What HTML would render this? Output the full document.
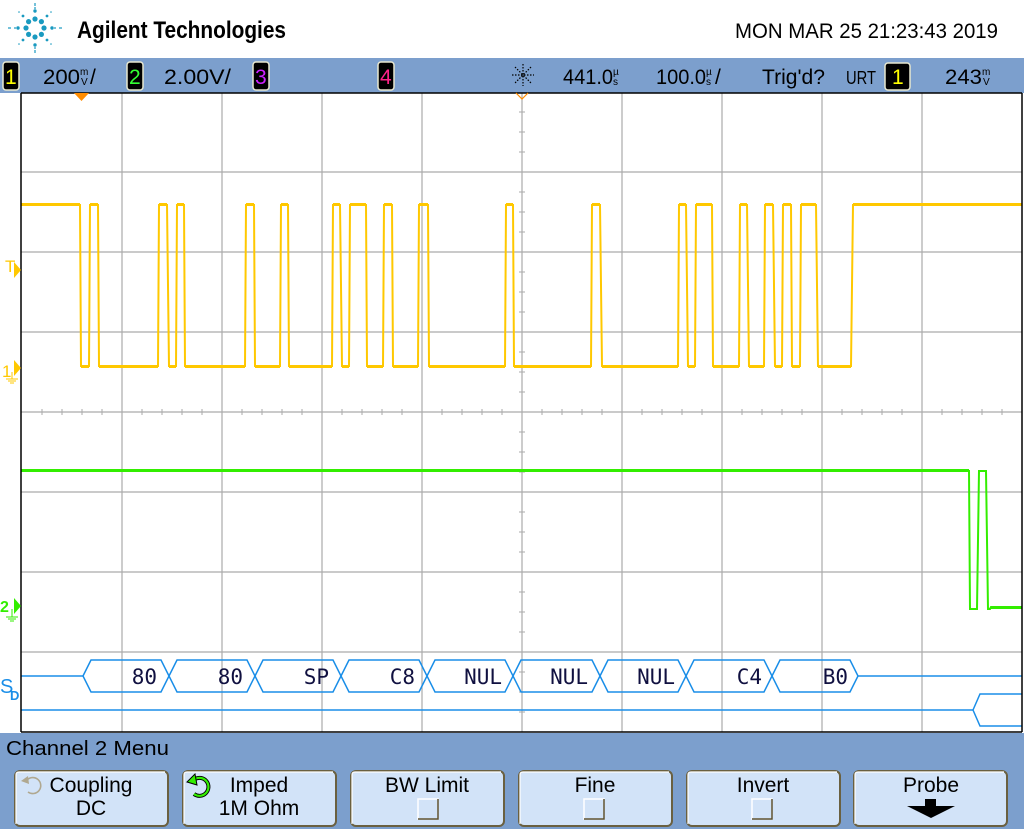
<!DOCTYPE html>
<html><head><meta charset="utf-8"><style>
html,body{margin:0;padding:0;background:#fff;}
svg{display:block;font-family:"Liberation Sans",sans-serif;}
</style></head><body>
<svg width="1024" height="829" viewBox="0 0 1024 829" xmlns="http://www.w3.org/2000/svg">
<!-- header -->
<rect x="0" y="0" width="1024" height="58" fill="#fff"/>
<g fill="#1a9ac0" transform="translate(35,28)">
  <circle cx="0" cy="-9" r="2.6"/><circle cx="0" cy="9" r="2.6"/><circle cx="-9" cy="0" r="2.6"/><circle cx="9" cy="0" r="2.6"/>
  <circle cx="-6.4" cy="-6.4" r="2.6"/><circle cx="6.4" cy="-6.4" r="2.6"/><circle cx="-6.4" cy="6.4" r="2.6"/><circle cx="6.4" cy="6.4" r="2.6"/>
  <circle cx="0" cy="-17" r="1.7"/><circle cx="0" cy="17" r="1.7"/><circle cx="-17" cy="0" r="1.7"/><circle cx="17" cy="0" r="1.7"/>
  <circle cx="-12" cy="-12" r="1.4"/><circle cx="12" cy="-12" r="1.4"/><circle cx="-12" cy="12" r="1.4"/><circle cx="12" cy="12" r="1.4"/>
  <circle cx="-16" cy="-16" r="0.8"/><circle cx="16" cy="-16" r="0.8"/><circle cx="-16" cy="16" r="0.8"/><circle cx="16" cy="16" r="0.8"/>
  <rect x="-0.6" y="-25" width="1.2" height="3"/><rect x="-0.6" y="22" width="1.2" height="3"/><rect x="-27" y="-0.6" width="3" height="1.2"/><rect x="24" y="-0.6" width="3" height="1.2"/>
  <rect x="-21" y="-0.6" width="2" height="1.2"/><rect x="19" y="-0.6" width="2" height="1.2"/><rect x="-0.6" y="-21" width="1.2" height="2"/><rect x="-0.6" y="19" width="1.2" height="2"/>
</g>
<text x="77" y="38" font-size="24" font-weight="bold" fill="#000" textLength="209" lengthAdjust="spacingAndGlyphs">Agilent Technologies</text>
<text x="735" y="38" font-size="21" fill="#000" textLength="263" lengthAdjust="spacingAndGlyphs">MON MAR 25 21:23:43 2019</text>

<!-- status bar -->
<rect x="0" y="58" width="1024" height="35" fill="#7c9fcd"/>
<g font-size="21">
<rect x="3" y="62" width="16" height="28" rx="3" fill="#000" stroke="#e8e8d0" stroke-width="1.5"/>
<text x="5" y="84" fill="#ffff00">1</text>
<text x="43" y="84" fill="#000" textLength="37" lengthAdjust="spacingAndGlyphs">200</text>
<text x="80" y="75" font-size="10" fill="#000">m</text><text x="81" y="85" font-size="10" fill="#000">V</text>
<text x="90" y="84" fill="#000">/</text>
<rect x="127" y="62" width="16" height="28" rx="3" fill="#000" stroke="#e8e8d0" stroke-width="1.5"/>
<text x="129" y="84" fill="#33ff33">2</text>
<text x="164" y="84" fill="#000" textLength="67" lengthAdjust="spacingAndGlyphs">2.00V/</text>
<rect x="253" y="62" width="16" height="28" rx="3" fill="#000" stroke="#e8e8d0" stroke-width="1.5"/>
<text x="255" y="84" fill="#cc22ff">3</text>
<rect x="378" y="62" width="16" height="28" rx="3" fill="#000" stroke="#e8e8d0" stroke-width="1.5"/>
<text x="380" y="84" fill="#ff2288">4</text>
<g stroke="#000" stroke-width="1.2" stroke-dasharray="1.5 1.5"><line x1="512" y1="75" x2="534" y2="75"/><line x1="523" y1="64" x2="523" y2="86"/><line x1="515" y1="67" x2="531" y2="83"/><line x1="531" y1="67" x2="515" y2="83"/></g>
<text x="563" y="84" fill="#000" textLength="50" lengthAdjust="spacingAndGlyphs">441.0</text>
<text x="613" y="75" font-size="10" fill="#000">µ</text><text x="613" y="85" font-size="10" fill="#000">s</text>
<text x="656" y="84" fill="#000" textLength="50" lengthAdjust="spacingAndGlyphs">100.0</text>
<text x="706" y="75" font-size="10" fill="#000">µ</text><text x="706" y="85" font-size="10" fill="#000">s</text>
<text x="715" y="84" fill="#000">/</text>
<text x="762" y="84" fill="#000" textLength="63" lengthAdjust="spacingAndGlyphs">Trig'd?</text>
<text x="846" y="84" fill="#000" font-size="18" textLength="30" lengthAdjust="spacingAndGlyphs">URT</text>
<rect x="885" y="63" width="25" height="27" rx="3" fill="#000" stroke="#e8e8d0" stroke-width="1.5"/>
<text x="892" y="84" fill="#ffff00">1</text>
<text x="945" y="84" fill="#000" textLength="37" lengthAdjust="spacingAndGlyphs">243</text>
<text x="982" y="75" font-size="10" fill="#000">m</text><text x="983" y="85" font-size="10" fill="#000">V</text>
</g>

<!-- screen -->
<rect x="21" y="93" width="1001" height="639" fill="#fff"/>
<g stroke="#aaa" stroke-width="1.2">
  <line x1="122" y1="93" x2="122" y2="732"/><line x1="222" y1="93" x2="222" y2="732"/><line x1="322" y1="93" x2="322" y2="732"/><line x1="422" y1="93" x2="422" y2="732"/>
  <line x1="522" y1="93" x2="522" y2="732"/><line x1="622" y1="93" x2="622" y2="732"/><line x1="722" y1="93" x2="722" y2="732"/><line x1="822" y1="93" x2="822" y2="732"/><line x1="922" y1="93" x2="922" y2="732"/>
  <line x1="21" y1="172" x2="1022" y2="172"/><line x1="21" y1="252" x2="1022" y2="252"/><line x1="21" y1="332" x2="1022" y2="332"/><line x1="21" y1="412" x2="1022" y2="412"/>
  <line x1="21" y1="492" x2="1022" y2="492"/><line x1="21" y1="572" x2="1022" y2="572"/><line x1="21" y1="652" x2="1022" y2="652"/>
</g>
<g stroke="#aaa" stroke-width="1">
  <path d="M42 409v6M62 409v6M82 409v6M102 409v6M142 409v6M162 409v6M182 409v6M202 409v6M242 409v6M262 409v6M282 409v6M302 409v6M342 409v6M362 409v6M382 409v6M402 409v6M442 409v6M462 409v6M482 409v6M502 409v6M542 409v6M562 409v6M582 409v6M602 409v6M642 409v6M662 409v6M682 409v6M702 409v6M742 409v6M762 409v6M782 409v6M802 409v6M842 409v6M862 409v6M882 409v6M902 409v6M942 409v6M962 409v6M982 409v6M1002 409v6"/>
  <path d="M519 112h6M519 132h6M519 152h6M519 192h6M519 212h6M519 232h6M519 272h6M519 292h6M519 312h6M519 352h6M519 372h6M519 392h6M519 432h6M519 452h6M519 472h6M519 512h6M519 532h6M519 552h6M519 592h6M519 612h6M519 632h6M519 672h6M519 692h6M519 712h6"/>
</g>
<!-- yellow -->
<polyline fill="none" stroke="#ffc800" stroke-width="2" points="21,205 80,205 81,366 89,366 90,205 98,205 99,366 158,366 159,205 167,205 169,366 176,366 177,205 184,205 185,366 245,366 246,205 254,205 255,366 280,366 281,205 288,205 289,366 332,366 333,205 340,205 342,366 349,366 350,205 366,205 367,366 383,366 384,205 392,205 393,366 418,366 419,205 428,205 429,366 505,366 506,205 513,205 514,366 591,366 592,205 600,205 602,366 678,366 679,205 686,205 688,366 695,366 696,205 712,205 713,366 739,366 740,205 747,205 749,366 764,366 765,205 773,205 775,366 782,366 783,205 791,205 792,366 800,366 801,205 816,205 818,366 851,366 853,205 1022,205"/>
<path d="M21 204h59M90 204h8M159 204h8M177 204h7M246 204h8M281 204h7M333 204h7M350 204h16M384 204h8M419 204h9M506 204h7M592 204h8M679 204h7M696 204h16M740 204h7M765 204h8M783 204h8M801 204h15M853 204h169" stroke="#ffc800" stroke-width="2"/>
<path d="M81 367h8M99 367h59M169 367h7M185 367h60M255 367h25M289 367h43M342 367h7M367 367h16M393 367h25M429 367h76M514 367h77M602 367h76M688 367h7M713 367h26M749 367h15M775 367h7M792 367h8M818 367h33" stroke="#ffc800" stroke-width="2"/>
<!-- green -->
<polyline fill="none" stroke="#33ee00" stroke-width="2" points="21,471 969,471 970,609 977,609 979,471 986,471 988,609 990,609 991,607 1022,607"/>
<line x1="21" y1="470" x2="969" y2="470" stroke="#33ee00" stroke-width="2"/>
<line x1="991" y1="608" x2="1022" y2="608" stroke="#33ee00" stroke-width="2"/>
<!-- serial decode -->
<g fill="none" stroke="#1a8ee8" stroke-width="1.5">
  <line x1="21" y1="676" x2="83" y2="676"/>
  <line x1="858" y1="676" x2="1022" y2="676"/>
  <line x1="21" y1="710" x2="973" y2="710"/>
  <path d="M973 710 L980 694 L1022 694 M973 710 L980 726 L1022 726"/>
  <path d="M83 676 L91 660 L161 660 L169 676 L161 692 L91 692 Z"/>
  <path d="M169 676 L177 660 L247 660 L255 676 L247 692 L177 692 Z"/>
  <path d="M255 676 L263 660 L333 660 L341 676 L333 692 L263 692 Z"/>
  <path d="M341 676 L349 660 L419 660 L427 676 L419 692 L349 692 Z"/>
  <path d="M427 676 L435 660 L505 660 L513 676 L505 692 L435 692 Z"/>
  <path d="M513 676 L521 660 L592 660 L600 676 L592 692 L521 692 Z"/>
  <path d="M600 676 L608 660 L678 660 L686 676 L678 692 L608 692 Z"/>
  <path d="M686 676 L694 660 L764 660 L772 676 L764 692 L694 692 Z"/>
  <path d="M772 676 L780 660 L850 660 L858 676 L850 692 L780 692 Z"/>
</g>
<g font-family="'DejaVu Sans Mono','Liberation Mono',monospace" font-size="21" fill="#101040" text-anchor="end">
  <text x="157" y="684" font-family="'DejaVu Sans Mono','Liberation Mono',monospace">80</text>
  <text x="243" y="684" font-family="'DejaVu Sans Mono','Liberation Mono',monospace">80</text>
  <text x="329" y="684" font-family="'DejaVu Sans Mono','Liberation Mono',monospace">SP</text>
  <text x="415" y="684" font-family="'DejaVu Sans Mono','Liberation Mono',monospace">C8</text>
  <text x="502" y="684" font-family="'DejaVu Sans Mono','Liberation Mono',monospace">NUL</text>
  <text x="588" y="684" font-family="'DejaVu Sans Mono','Liberation Mono',monospace">NUL</text>
  <text x="675" y="684" font-family="'DejaVu Sans Mono','Liberation Mono',monospace">NUL</text>
  <text x="762" y="684" font-family="'DejaVu Sans Mono','Liberation Mono',monospace">C4</text>
  <text x="848" y="684" font-family="'DejaVu Sans Mono','Liberation Mono',monospace">B0</text>
</g>
<!-- border -->
<line x1="21" y1="93" x2="1022" y2="93" stroke="#000" stroke-width="1.5"/>
<line x1="21" y1="93" x2="21" y2="732" stroke="#000" stroke-width="1.5"/>
<line x1="1022" y1="93" x2="1022" y2="732" stroke="#000" stroke-width="1.5"/>
<line x1="21" y1="732" x2="1022" y2="732" stroke="#000" stroke-width="1.5"/>
<!-- left markers -->
<path d="M74 93 L89 93 L81.5 101 Z" fill="#ff8c00"/>
<path d="M516 93 L522 99 L528 93" fill="none" stroke="#ff8c00" stroke-width="1.2"/>
<text x="5" y="272" font-size="17" fill="#ffc800">T</text>
<path d="M14 262 L21 270 L14 278 Z" fill="#ffc800"/>
<text x="2" y="377" font-size="17" fill="#ffc800">1</text>
<path d="M14 360 L21 368 L14 376 Z" fill="#ffc800"/>
<path d="M12 372v7M6 379h12M8 381h8M10 383h4" stroke="#ffc800" fill="none"/>
<text x="0" y="612" font-size="16" font-weight="bold" fill="#33ee00">2</text>
<path d="M14 598 L21 606 L14 614 Z" fill="#33ee00"/>
<path d="M12 609v8M6 617h12M8 619h8M10 621h4" stroke="#33ee00" fill="none"/>
<text x="0" y="693" font-size="20" fill="#1a8ee8">S</text>
<text x="10" y="700" font-size="13" font-weight="bold" fill="#1a8ee8">D</text>

<!-- menu -->
<rect x="0" y="733" width="1024" height="96" fill="#7c9fcd"/>
<text x="6" y="755" font-size="20" fill="#000" textLength="163" lengthAdjust="spacingAndGlyphs">Channel 2  Menu</text>
<g stroke="#6a6040" stroke-width="2" fill="#d2e3f8">
  <rect x="15" y="771" width="153" height="55" rx="5"/>
  <rect x="183" y="771" width="153" height="55" rx="5"/>
  <rect x="351" y="771" width="153" height="55" rx="5"/>
  <rect x="519" y="771" width="153" height="55" rx="5"/>
  <rect x="687" y="771" width="153" height="55" rx="5"/>
  <rect x="854" y="771" width="153" height="55" rx="5"/>
</g>
<g stroke="#fff" stroke-width="1.2" fill="none">
  <path d="M16 824V775q0-3 3-3h146M184 824V775q0-3 3-3h146M352 824V775q0-3 3-3h146M520 824V775q0-3 3-3h146M688 824V775q0-3 3-3h146M855 824V775q0-3 3-3h146"/>
</g>
<g font-size="21" fill="#000" text-anchor="middle">
  <text x="91" y="792">Coupling</text><text x="91" y="815">DC</text>
  <text x="259" y="792">Imped</text><text x="259" y="815">1M Ohm</text>
  <text x="427" y="792">BW Limit</text>
  <text x="595" y="792">Fine</text>
  <text x="763" y="792">Invert</text>
  <text x="931" y="792">Probe</text>
</g>
<!-- coupling icon -->
<path d="M27 780 A8 8 0 1 1 28 792" fill="none" stroke="#b0a890" stroke-width="1.6"/>
<path d="M21 781 L28 776 L29 784 Z" fill="#b0a890"/>
<!-- imped icon -->
<path d="M195 779 A9 9 0 1 1 194 794" fill="none" stroke="#000" stroke-width="4"/>
<path d="M195 779 A9 9 0 1 1 194 794" fill="none" stroke="#33ee00" stroke-width="2.2"/>
<path d="M187 782 L195 774 L197 785 Z" fill="#33ee00" stroke="#000" stroke-width="1"/>
<!-- checkboxes -->
<g fill="#d2e3f8" stroke-width="1.5">
  <rect x="418" y="799" width="20" height="20" stroke="#fff"/>
  <path d="M438 799v20h-20" stroke="#5a5030" fill="none"/>
  <rect x="584" y="799" width="20" height="20" stroke="#fff"/>
  <path d="M604 799v20h-20" stroke="#5a5030" fill="none"/>
  <rect x="752" y="799" width="20" height="20" stroke="#fff"/>
  <path d="M772 799v20h-20" stroke="#5a5030" fill="none"/>
</g>
<path d="M925 799h11v7h19l-24 12l-24 -12h18z" fill="#000"/>
</svg>
</body></html>
